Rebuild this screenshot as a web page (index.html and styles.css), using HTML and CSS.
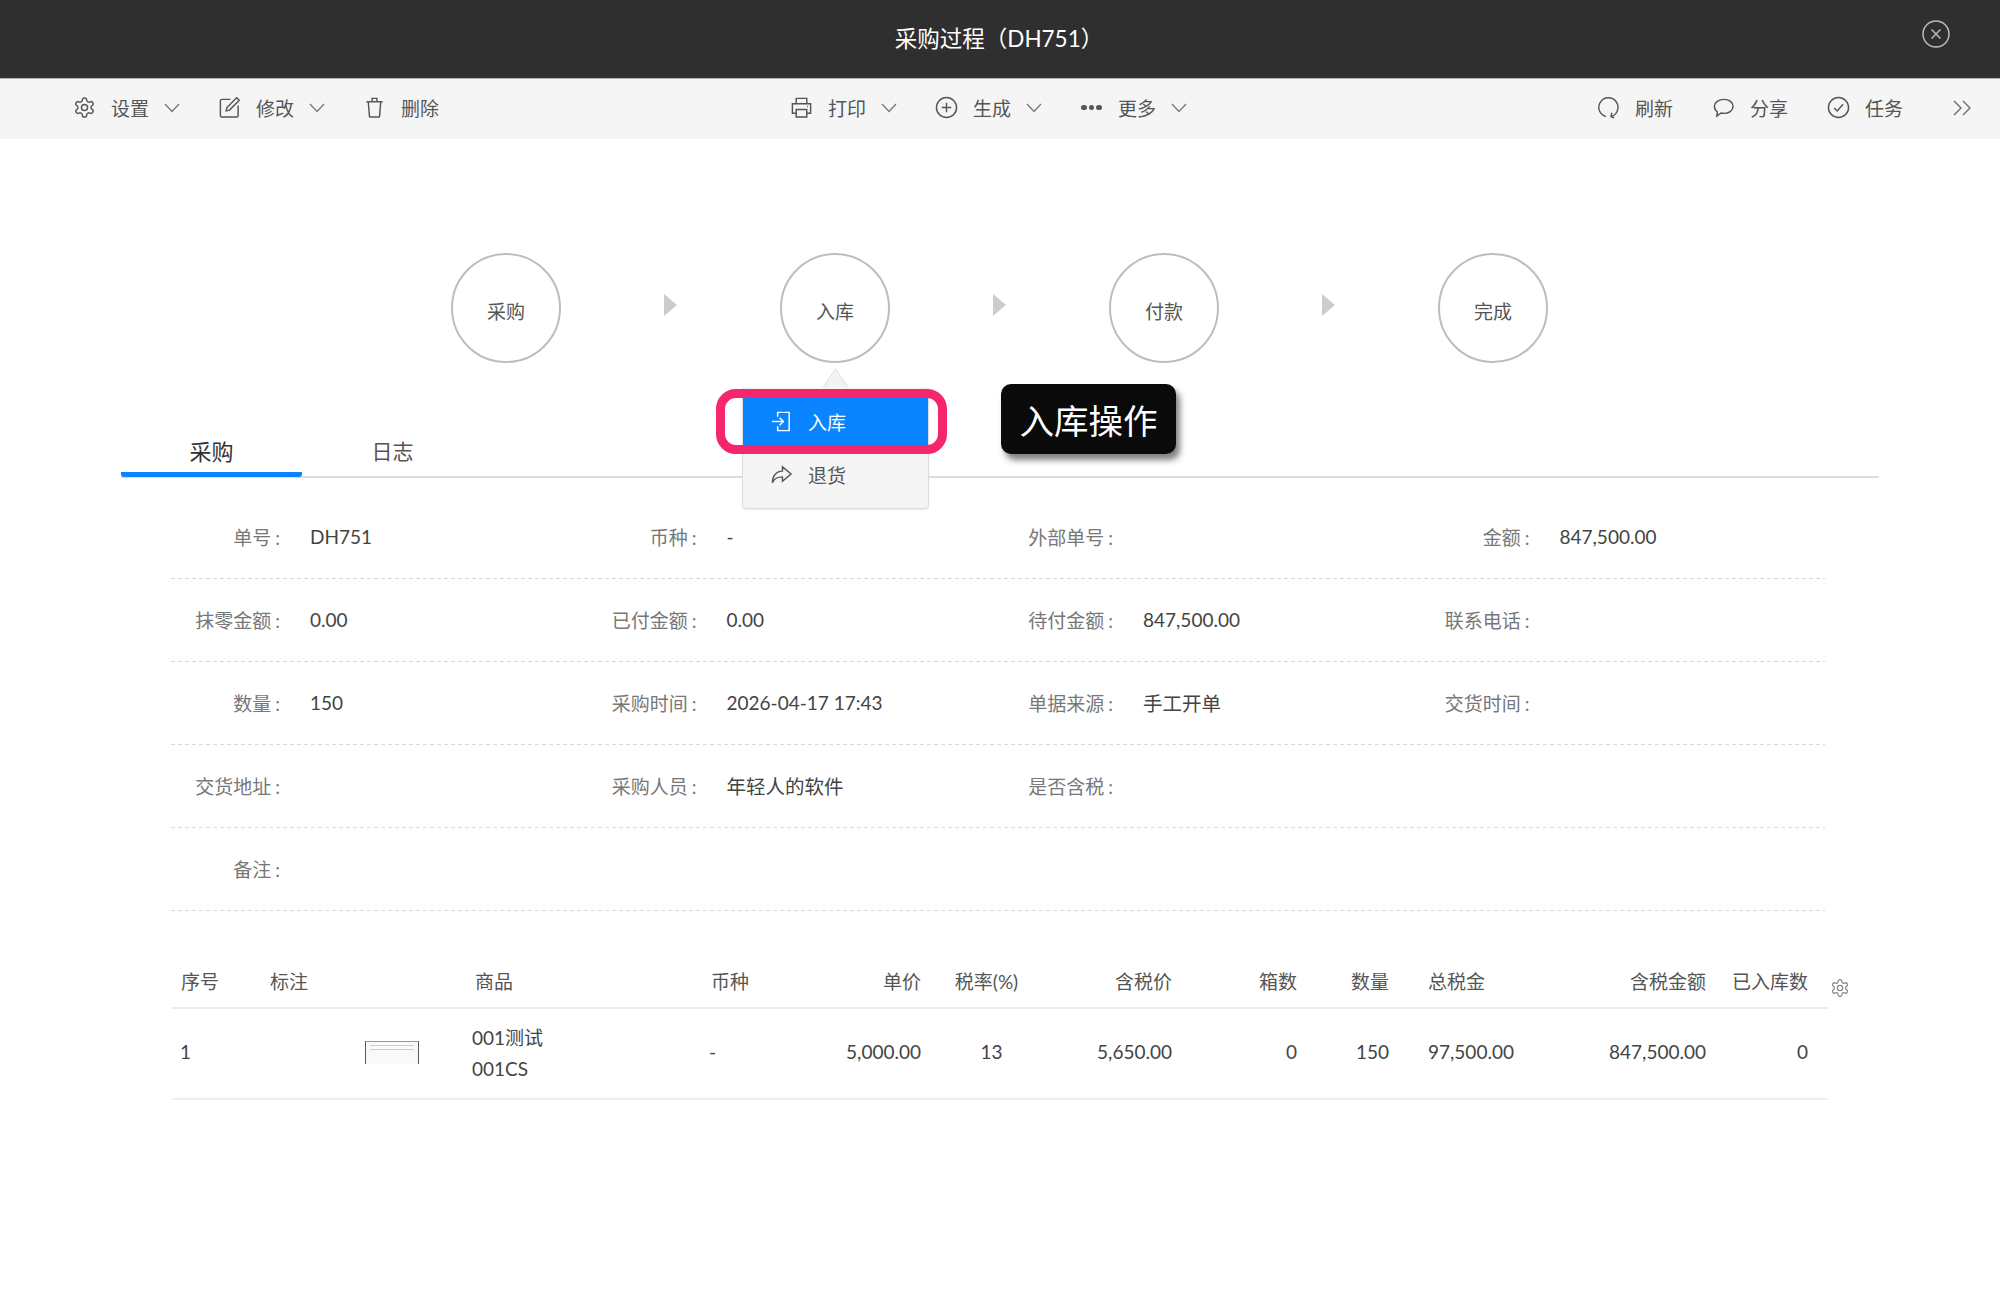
FILE: index.html
```html
<!DOCTYPE html>
<html lang="zh-CN">
<head>
    <meta charset="UTF-8">
    <title>采购过程(DH751)</title>
    <link rel="stylesheet" href="styles.css">
</head>
<body>
    <svg class="defs" width="0" height="0">
        <symbol id="i-gear" viewBox="0 0 24 24"><path d="M12.22 2h-.44a2 2 0 0 0-2 2v.18a2 2 0 0 1-1 1.73l-.43.25a2 2 0 0 1-2 0l-.15-.08a2 2 0 0 0-2.73.73l-.22.38a2 2 0 0 0 .73 2.73l.15.1a2 2 0 0 1 1 1.72v.51a2 2 0 0 1-1 1.74l-.15.09a2 2 0 0 0-.73 2.73l.22.38a2 2 0 0 0 2.73.73l.15-.08a2 2 0 0 1 2 0l.43.25a2 2 0 0 1 1 1.73V20a2 2 0 0 0 2 2h.44a2 2 0 0 0 2-2v-.18a2 2 0 0 1 1-1.73l.43-.25a2 2 0 0 1 2 0l.15.08a2 2 0 0 0 2.73-.73l.22-.39a2 2 0 0 0-.73-2.73l-.15-.08a2 2 0 0 1-1-1.74v-.5a2 2 0 0 1 1-1.74l.15-.09a2 2 0 0 0 .73-2.73l-.22-.38a2 2 0 0 0-2.73-.73l-.15.08a2 2 0 0 1-2 0l-.43-.25a2 2 0 0 1-1-1.73V4a2 2 0 0 0-2-2z"/><circle cx="12" cy="12" r="3.2"/></symbol>
        <symbol id="i-edit" viewBox="0 0 24 24"><path d="M13 3.500H4a1.500 1.500 0 0 0-1.500 1.500v15.500a1.500 1.500 0 0 0 1.500 1.500h15.500a1.500 1.500 0 0 0 1.500-1.500V10"/><path d="M19.500 1.800l2.700 2.700L12 14.700l-3.500.8.800-3.500z"/></symbol>
        <symbol id="i-trash" viewBox="0 0 24 24"><path d="M3.500 6h17"/><path d="M9.500 6V2.500h5V6"/><path d="M5.500 6l1.200 15a1 1 0 0 0 1 1h8.600a1 1 0 0 0 1-1l1.200-15"/></symbol>
        <symbol id="i-print" viewBox="0 0 24 24"><path d="M6.500 8V2.500h11V8"/><path d="M6.500 18H2.500V8h19v10h-4"/><path d="M6.500 14h11v8h-11z"/><path d="M18 11h.8"/></symbol>
        <symbol id="i-plus" viewBox="0 0 24 24"><circle cx="12" cy="12" r="10.500"/><path d="M12 7v10M7 12h10"/></symbol>
        <symbol id="i-refresh" viewBox="0 0 24 24"><path d="M9.500 21.500A10 10 0 1 1 15 21.300"/><path d="M15.500 17.500l-1 4 3.500 1.200"/></symbol>
        <symbol id="i-chat" viewBox="0 0 24 24"><path d="M12.500 3.500c5.500 0 9.500 3.200 9.500 7.300s-4 7.300-9.500 7.300c-1.100 0-2.100-.1-3-.4L5 21l.6-4.300C3.400 15.300 2.500 13.200 2.500 10.800c0-4.100 4.500-7.300 10-7.300z"/></symbol>
        <symbol id="i-check" viewBox="0 0 24 24"><circle cx="12" cy="12" r="10.500"/><path d="M7.500 12.500l3.200 3.200 6-7"/></symbol>
        <symbol id="i-chev" viewBox="0 0 16 10"><path d="M1 1l7 7.500L15 1"/></symbol>
    </svg>

    <header class="titlebar">
        <h1>采购过程（DH751）</h1>
        <svg class="close" viewBox="0 0 28 28"><circle cx="14" cy="14" r="13"/><path d="M9.500 9.500l9 9M18.500 9.500l-9 9"/></svg>
    </header>

    <nav class="toolbar">
        <div class="tool-group">
            <a class="tool"><svg class="ico"><use href="#i-gear"/></svg>设置<svg class="chev"><use href="#i-chev"/></svg></a>
            <a class="tool"><svg class="ico"><use href="#i-edit"/></svg>修改<svg class="chev"><use href="#i-chev"/></svg></a>
            <a class="tool"><svg class="ico"><use href="#i-trash"/></svg>删除</a>
        </div>
        <div class="tool-group center">
            <a class="tool"><svg class="ico"><use href="#i-print"/></svg>打印<svg class="chev"><use href="#i-chev"/></svg></a>
            <a class="tool"><svg class="ico"><use href="#i-plus"/></svg>生成<svg class="chev"><use href="#i-chev"/></svg></a>
            <a class="tool"><span class="dots"><i></i><i></i><i></i></span>更多<svg class="chev"><use href="#i-chev"/></svg></a>
        </div>
        <div class="tool-group right">
            <a class="tool"><svg class="ico"><use href="#i-refresh"/></svg>刷新</a>
            <a class="tool"><svg class="ico"><use href="#i-chat"/></svg>分享</a>
            <a class="tool"><svg class="ico"><use href="#i-check"/></svg>任务</a>
            <svg class="expand" viewBox="0 0 20 16"><path d="M2 1l7 7-7 7M11 1l7 7-7 7"/></svg>
        </div>
    </nav>

    <section class="steps">
        <div class="step">采购</div>
        <div class="step-arrow"><span></span></div>
        <div class="step">入库
            <svg class="caret" viewBox="0 0 27 20"><path d="M.5 20L13.500 .8 26.500 20"/></svg>
            <div class="popmenu">
                <div class="popitem active">
                    <svg class="ico" viewBox="0 0 24 24"><path d="M8 7V2.500h12v19H8V17"/><path d="M2 12h12"/><path d="M10 8l4 4-4 4"/></svg>入库
                </div>
                <div class="popitem">
                    <svg class="ico" viewBox="0 0 24 24"><path d="M13 4l9 7.500-9 7.500v-4.500c-5 0-8.500 1.500-10.500 6 0-7 4-12 10.500-12z"/></svg>退货
                </div>
            </div>
            <div class="highlight"></div>
            <div class="tip">入库操作</div>
        </div>
        <div class="step-arrow"><span></span></div>
        <div class="step">付款</div>
        <div class="step-arrow"><span></span></div>
        <div class="step">完成</div>
    </section>

    <div class="tabs">
        <div class="tab active">采购</div>
        <div class="tab">日志</div>
    </div>

    <section class="fields">
        <div class="row">
            <div class="field"><label>单号<b>:</b></label><span>DH751</span></div>
            <div class="field"><label>币种<b>:</b></label><span>-</span></div>
            <div class="field"><label>外部单号<b>:</b></label><span></span></div>
            <div class="field"><label>金额<b>:</b></label><span>847,500.00</span></div>
        </div>
        <div class="row">
            <div class="field"><label>抹零金额<b>:</b></label><span>0.00</span></div>
            <div class="field"><label>已付金额<b>:</b></label><span>0.00</span></div>
            <div class="field"><label>待付金额<b>:</b></label><span>847,500.00</span></div>
            <div class="field"><label>联系电话<b>:</b></label><span></span></div>
        </div>
        <div class="row">
            <div class="field"><label>数量<b>:</b></label><span>150</span></div>
            <div class="field"><label>采购时间<b>:</b></label><span>2026-04-17 17:43</span></div>
            <div class="field"><label>单据来源<b>:</b></label><span class="cn">手工开单</span></div>
            <div class="field"><label>交货时间<b>:</b></label><span></span></div>
        </div>
        <div class="row">
            <div class="field"><label>交货地址<b>:</b></label><span></span></div>
            <div class="field"><label>采购人员<b>:</b></label><span class="cn">年轻人的软件</span></div>
            <div class="field"><label>是否含税<b>:</b></label><span></span></div>
            <div class="field"></div>
        </div>
        <div class="row">
            <div class="field"><label>备注<b>:</b></label><span></span></div>
        </div>
    </section>

    <div class="table-wrap">
        <table class="goods">
            <colgroup>
                <col class="c1"><col class="c2"><col class="c3"><col class="c4"><col class="c5"><col class="c6">
                <col class="c7"><col class="c8"><col class="c9"><col class="c10"><col class="c11"><col class="c12"><col class="c13"><col class="c14">
            </colgroup>
            <thead>
                <tr>
                    <th>序号</th>
                    <th>标注</th>
                    <th></th>
                    <th>商品</th>
                    <th>币种</th>
                    <th class="num">单价</th>
                    <th class="mid">税率(%)</th>
                    <th class="num">含税价</th>
                    <th class="num">箱数</th>
                    <th class="num">数量</th>
                    <th class="tax">总税金</th>
                    <th class="num">含税金额</th>
                    <th class="num">已入库数</th>
                    <th></th>
                </tr>
            </thead>
            <tbody>
                <tr>
                    <td class="first">1</td>
                    <td></td>
                    <td class="thumb-cell"><div class="thumb"><i></i><i></i></div></td>
                    <td class="name"><div>001测试</div><div>001CS</div></td>
                    <td class="dash">-</td>
                    <td class="num">5,000.00</td>
                    <td class="mid rate">13</td>
                    <td class="num">5,650.00</td>
                    <td class="num">0</td>
                    <td class="num">150</td>
                    <td class="tax">97,500.00</td>
                    <td class="num">847,500.00</td>
                    <td class="num">0</td>
                    <td></td>
                </tr>
            </tbody>
        </table>
        <svg class="table-gear"><use href="#i-gear"/></svg>
    </div>
</body>
</html>
```

FILE: styles.css
```css
* {
    box-sizing: border-box;
}
body {
    margin: 0;
    background: #fff;
    color: #444;
    font-family: Lato, "Noto Sans CJK SC", sans-serif;
    font-size: 19px;
}
.defs {
    position: absolute;
}
.titlebar {
    height: 79px;
    background: #2f2f2f;
    border-bottom: 1px solid #b5b5b5;
    position: relative;
    display: flex;
    align-items: center;
    justify-content: center;
    padding: 0 2px 5px 0;
}
.titlebar h1 {
    margin: 0;
    color: #fff;
    font-size: 22.500px;
    font-weight: 400;
}
.close {
    position: absolute;
    right: 50px;
    top: 20px;
    width: 28px;
    height: 28px;
    fill: none;
    stroke: #bbb;
    stroke-width: 1.500;
}

.toolbar {
    height: 60px;
    background: #f5f5f5;
    display: flex;
    align-items: center;
    padding: 0 28px 3px 73px;
}
.tool-group {
    display: flex;
    align-items: center;
    gap: 38px;
}
.tool-group.center {
    margin-left: 351px;
}
.tool-group.right {
    margin-left: auto;
    gap: 39px;
}
.tool {
    display: flex;
    align-items: center;
    color: #555;
}
.ico {
    width: 23px;
    height: 23px;
    margin-right: 15px;
    fill: none;
    stroke: #555;
    stroke-width: 1.500;
}
.chev {
    width: 16px;
    height: 10px;
    margin-left: 15px;
    fill: none;
    stroke: #777;
    stroke-width: 1.300;
}
.dots {
    width: 23px;
    margin-right: 15px;
    display: flex;
    justify-content: center;
    gap: 2px;
}
.dots i {
    width: 5.500px;
    height: 5.500px;
    border-radius: 50%;
    background: #555;
}
.expand {
    width: 20px;
    height: 16px;
    margin-left: 10px;
    fill: none;
    stroke: #666;
    stroke-width: 1.300;
}

.steps {
    margin-top: 114px;
    padding-right: 1px;
    display: flex;
    justify-content: center;
}
.step {
    width: 110px;
    height: 110px;
    border: 2px solid #bdbdbd;
    border-radius: 50%;
    display: flex;
    align-items: center;
    justify-content: center;
    padding-top: 5px;
    color: #555;
    position: relative;
}
.step-arrow {
    width: 219px;
    display: flex;
    align-items: center;
    justify-content: center;
    padding-bottom: 7px;
}
.step-arrow span {
    border-left: 13px solid #ccc;
    border-top: 11px solid transparent;
    border-bottom: 11px solid transparent;
}
.caret {
    position: absolute;
    left: 40px;
    top: 113px;
    width: 27px;
    height: 20px;
    fill: #f3f3f3;
    stroke: #ddd;
    stroke-width: 1;
}
.popmenu {
    position: absolute;
    left: -40px;
    top: 132px;
    width: 187px;
    height: 122px;
    padding-top: 11px;
    background: #f5f5f5;
    border: 1px solid #ddd;
    border-top: 0;
    border-radius: 4px;
    box-shadow: 0 1px 2px rgba(0,0,0,.08);
    z-index: 2;
}
.popitem {
    height: 47px;
    display: flex;
    align-items: center;
    padding-left: 27px;
    margin-bottom: 6px;
    color: #555;
}
.popitem .ico {
    margin-right: 15px;
}
.popitem.active {
    background: #0a84ff;
    color: #fff;
}
.popitem.active .ico {
    stroke: #fff;
}
.highlight {
    position: absolute;
    left: -66px;
    top: 134px;
    width: 231px;
    height: 65px;
    border: 9px solid #f5256e;
    border-radius: 20px;
    z-index: 3;
}
.tip {
    position: absolute;
    left: 219px;
    top: 129px;
    width: 175px;
    height: 70px;
    background: #0a0a0a;
    color: #fff;
    border-radius: 10px;
    font-size: 34.500px;
    display: flex;
    align-items: center;
    justify-content: center;
    box-shadow: 4px 6px 6px rgba(0,0,0,.5);
    white-space: nowrap;
    z-index: 3;
}

.tabs {
    margin: 64px 121px 0;
    height: 51px;
    display: flex;
    border-bottom: 2px solid #ddd;
}
.tab {
    width: 181px;
    height: 50px;
    display: flex;
    align-items: center;
    justify-content: center;
    padding-top: 1px;
    color: #555;
    font-size: 21px;
    border-bottom: 5px solid transparent;
}
.tab.active {
    color: #333;
    font-size: 22px;
    border-bottom-color: #0a84ff;
    border-radius: 3px;
}

.fields {
    margin: 18px 175px 0 171px;
}
.row {
    display: grid;
    grid-template-columns: 416.5px 416.5px 416.5px 1fr;
    height: 83px;
    align-items: center;
    background: linear-gradient(to right, #d9d9d9 4px, transparent 4px) left bottom / 7px 1.500px repeat-x;
}
.field {
    display: flex;
    align-items: center;
    padding-bottom: 2px;
}
.field label {
    width: 109px;
    margin-right: 30px;
    text-align: right;
    color: #777;
    white-space: nowrap;
}
.field label b {
    font-weight: 400;
    margin-left: 4px;
}
.field .cn {
    font-size: 19.500px;
}

.table-wrap {
    margin: 46px 172px 0;
    position: relative;
}
.goods {
    width: 1656px;
    table-layout: fixed;
    border-collapse: collapse;
}
.c1 { width: 89px; }
.c2 { width: 95px; }
.c3 { width: 110px; }
.c4 { width: 236px; }
.c5 { width: 88px; }
.c6 { width: 140px; }
.c7 { width: 113px; }
.c8 { width: 138px; }
.c9 { width: 125px; }
.c10 { width: 92px; }
.c11 { width: 152px; }
.c12 { width: 165px; }
.c13 { width: 102px; }
.c14 { width: 11px; }
.goods th, .goods td {
    padding: 0 9px;
    font-weight: 400;
    text-align: left;
    color: #555;
    white-space: nowrap;
}
.goods th {
    height: 51px;
    padding-bottom: 3px;
    border-bottom: 2px solid #eee;
}
.goods td {
    height: 91px;
    padding-bottom: 5px;
    border-bottom: 2px solid #eee;
    color: #444;
}
.goods .num {
    text-align: right;
}
.goods .mid {
    text-align: center;
}
.goods .tax {
    padding-left: 30px;
}
.goods .rate {
    padding-left: 19px;
}
.goods .dash {
    padding-left: 7px;
}
.goods .first {
    padding-left: 8px;
}
.goods .name {
    padding-bottom: 1px;
}
.goods .thumb-cell {
    padding-bottom: 2px;
}
.name div {
    line-height: 31px;
    margin-left: -3px;
}
.thumb {
    width: 54px;
    height: 23px;
    border: 1px solid #555;
    border-top-color: #999;
    border-bottom: 0;
    background: #f9f9f9;
    padding: 3px 4px;
}
.thumb i {
    display: block;
    height: 1px;
    margin-bottom: 3px;
    background: #ccc;
}
.table-gear {
    position: absolute;
    left: 1658px;
    top: 21px;
    width: 20px;
    height: 20px;
    fill: none;
    stroke: #888;
    stroke-width: 1.500;
}
```
